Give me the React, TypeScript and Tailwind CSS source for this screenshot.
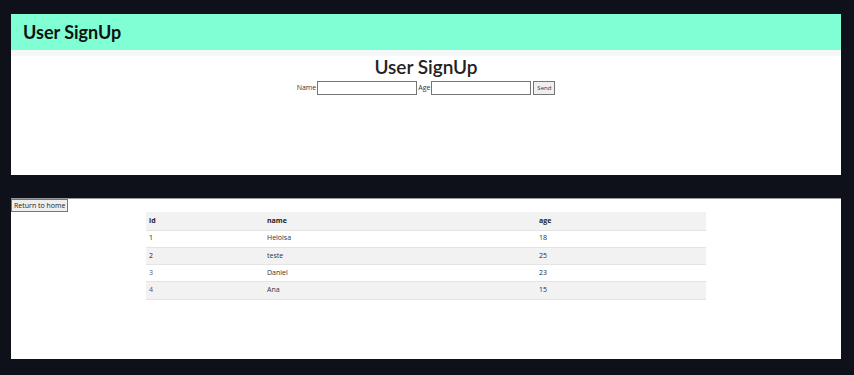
import React from 'react';

const users = [
  { id: 1, name: 'Heloisa', age: 18 },
  { id: 2, name: 'teste', age: 25 },
  { id: 3, name: 'Daniel', age: 23 },
  { id: 4, name: 'Ana', age: 15 },
];

const font = { fontFamily: '"Open Sans", "DejaVu Sans", sans-serif' };
const titleFont = { fontFamily: 'Lato, "Open Sans", sans-serif' };

export default function App() {
  return (
    <div className="min-h-[375px] w-full bg-[#0e1119] pt-[14px] pl-[11px]" style={font}>
      {/* signup panel */}
      <section className="flex h-[161px] w-[830px] flex-col bg-white">
        <header className="flex h-[36px] items-center bg-[#80ffd5] px-[12px]">
          <h1 className="text-[18px] font-bold text-[#111]" style={titleFont}>User SignUp</h1>
        </header>
        <div className="h-[6px] bg-[#f5f8f9]" />
        <div className="flex flex-col items-center">
          <h2 className="text-[19px] leading-[22px] font-semibold text-[#222]" style={titleFont}>User SignUp</h2>
          <form className="mt-[3px] flex items-center text-[7px] text-[#333]">
            <label className="mr-[1px]">Name</label>
            <input className="h-[14px] w-[100px] border border-[#767676] bg-white" />
            <label className="mx-[1px]">Age</label>
            <input className="h-[14px] w-[100px] border border-[#767676] bg-white" />
            <button
              type="button"
              className="ml-[2px] h-[14px] w-[22px] border border-[#767676] bg-[#efefef] text-[6px] text-[#333]"
            >
              Send
            </button>
          </form>
        </div>
      </section>

      {/* users panel */}
      <section className="mt-[23px] h-[161px] w-[830px] border-t border-[#999] bg-white">
        <button
          type="button"
          className="block h-[13px] border border-[#767676] bg-[#efefef] px-[2px] text-[7px] leading-[11px] text-[#222]"
        >
          Return to home
        </button>
        <table className="ml-[135px] w-[560px] border-collapse text-left text-[7px]">
          <thead>
            <tr className="h-[18px] border-b border-[#e4e4e4] bg-[#f2f2f2]">
              <th className="w-[118px] pl-[3px] font-bold text-[#222]">id</th>
              <th className="w-[272px] pl-[3px] font-bold text-[#222]">name</th>
              <th className="pl-[3px] font-bold text-[#222]">age</th>
            </tr>
          </thead>
          <tbody>
            {users.map((u, i) => (
              <tr
                key={u.id}
                className={
                  i % 2 === 1
                    ? 'h-[17.25px] border-b border-[#e4e4e4] bg-[#f2f2f2]'
                    : 'h-[17.25px] border-b border-[#e4e4e4] bg-white'
                }
              >
                <td className={i > 1 ? 'pl-[3px] text-[#4a5670]' : 'pl-[3px] text-[#222]'}>{u.id}</td>
                <td className="pl-[3px] text-[#333]">{u.name}</td>
                <td className="pl-[3px] text-[#1c2a4a]">{u.age}</td>
              </tr>
            ))}
          </tbody>
        </table>
      </section>
    </div>
  );
}
